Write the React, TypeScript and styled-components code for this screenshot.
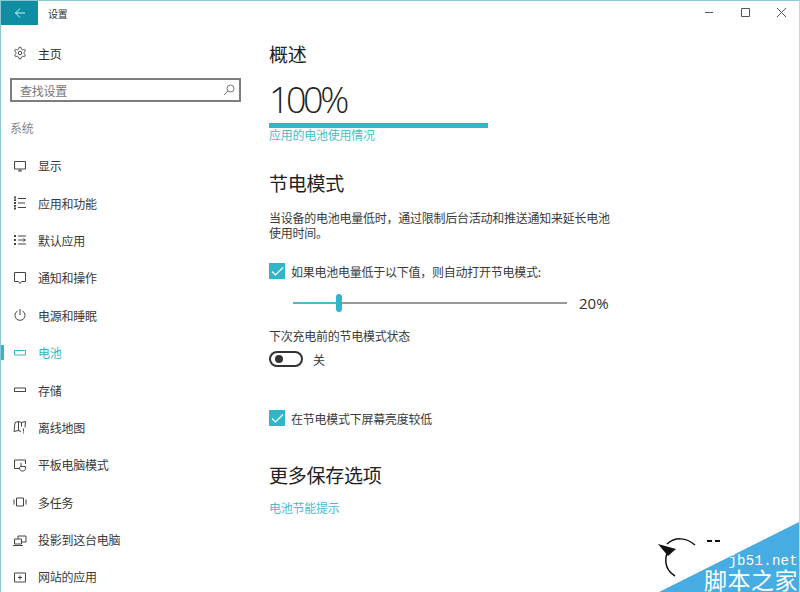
import React from "react";
import styled, { createGlobalStyle } from "styled-components";

const ACCENT = "#2fb6c9";
const CJK = `"Noto Sans CJK SC", "Liberation Sans", sans-serif`;

const GlobalStyle = createGlobalStyle`
  html, body {
    margin: 0;
    padding: 0;
    background: #fff;
    overflow: hidden;
  }
`;

const Window = styled.div`
  position: relative;
  box-sizing: border-box;
  width: 800px;
  height: 592px;
  overflow: hidden;
  background: #fff;
  border-top: 1px solid #8cc8d0;
  border-left: 1px solid #8cc8d0;
  border-right: 1px solid #b5dde2;
  font-family: ${CJK};
  letter-spacing: -0.25px;
  color: #2b2b2b;
`;

const TitleBar = styled.div`
  display: flex;
  align-items: center;
  height: 24px;
`;

const BackButton = styled.div`
  display: flex;
  align-items: center;
  justify-content: center;
  width: 37px;
  height: 24px;
  background: #0f8ea3;
`;

const Title = styled.div`
  margin-left: 10px;
  font-size: 10px;
  color: #333;
`;

const WindowControls = styled.div`
  display: flex;
  align-items: center;
  margin: 0 13px 2px auto;
  gap: 27px;
  color: #555;
`;

const Body = styled.div`
  display: flex;
`;

const Sidebar = styled.nav`
  box-sizing: border-box;
  width: 249px;
  flex: none;
`;

const HomeRow = styled.div`
  display: flex;
  align-items: center;
  height: 20px;
  margin-top: 18px;
  padding-left: 12px;
  gap: 11px;
  font-size: 12px;
`;

const SearchBox = styled.div`
  box-sizing: border-box;
  display: flex;
  align-items: center;
  justify-content: space-between;
  width: 231px;
  height: 24px;
  margin: 15px 0 0 9px;
  padding: 0 4px 0 8px;
  border: 2px solid #7d7d7d;
  font-size: 12px;
  color: #777;
`;

const GroupLabel = styled.div`
  height: 16px;
  line-height: 16px;
  margin: 18px 0 11px 9px;
  font-size: 12px;
  color: #888;
`;

const NavRow = styled.div<{ $active?: boolean }>`
  position: relative;
  display: flex;
  align-items: center;
  height: 37.4px;
  padding-left: 12px;
  gap: 11px;
  font-size: 12px;
  white-space: nowrap;
  color: ${(p) => (p.$active ? "#35b5c8" : "#3a3a3a")};
  svg {
    color: ${(p) => (p.$active ? "#35b5c8" : "#444")};
  }
  ${(p) =>
    p.$active &&
    `&::before {
      content: "";
      position: absolute;
      left: 0;
      top: 11px;
      width: 3px;
      height: 15px;
      background: ${ACCENT};
    }`}
`;

const Content = styled.main`
  width: 345px;
  margin-left: 19px;
`;

const Heading = styled.h2<{ $top: number }>`
  margin: ${(p) => p.$top}px 0 0;
  height: 26px;
  line-height: 26px;
  font-size: 19px;
  font-weight: 400;
  color: #222;
  white-space: nowrap;
`;

const BigPercent = styled.div`
  margin-top: 10px;
  height: 46px;
  line-height: 46px;
  font-family: "Open Sans", "Liberation Sans", sans-serif;
  font-size: 36px;
  font-weight: 300;
  color: #222;
  letter-spacing: -3.5px;
`;

const ChargeBar = styled.div`
  width: 219px;
  height: 5px;
  background: ${ACCENT};
`;

const TextLink = styled.a<{ $top: number }>`
  display: block;
  margin-top: ${(p) => p.$top}px;
  height: 14px;
  line-height: 14px;
  font-size: 12px;
  color: #49bccd;
`;

const Paragraph = styled.p`
  margin: 14px 0 0;
  width: 345px;
  line-height: 15px;
  font-size: 12px;
  color: #3a3a3a;
`;

const CheckRow = styled.div<{ $top: number }>`
  display: flex;
  align-items: center;
  gap: 6px;
  height: 16px;
  margin-top: ${(p) => p.$top}px;
  font-size: 12px;
  color: #3a3a3a;
  white-space: nowrap;
`;

const CheckBox = styled.span`
  display: flex;
  align-items: center;
  justify-content: center;
  flex: none;
  width: 16px;
  height: 16px;
  background: ${ACCENT};
`;

const SliderRow = styled.div`
  display: flex;
  align-items: center;
  height: 18px;
  margin: 15px 0 0 24px;
`;

const SliderTrack = styled.div`
  position: relative;
  width: 274px;
  height: 2px;
  background: #999;
`;

const SliderFill = styled.div`
  height: 100%;
  background: #45bccd;
`;

const SliderThumb = styled.div`
  position: absolute;
  top: -8px;
  width: 6px;
  height: 18px;
  margin-left: -3px;
  border-radius: 3px;
  background: ${ACCENT};
`;

const SliderValue = styled.span`
  margin-left: 12px;
  font-family: "Open Sans", "Liberation Sans", sans-serif;
  font-size: 15px;
  letter-spacing: 0;
  color: #333;
`;

const PlainLabel = styled.div`
  margin-top: 16px;
  height: 16px;
  line-height: 16px;
  font-size: 12px;
  color: #3a3a3a;
`;

const ToggleRow = styled.div`
  display: flex;
  align-items: center;
  gap: 10px;
  height: 16px;
  margin-top: 7px;
  font-size: 12px;
  color: #3a3a3a;
`;

const Toggle = styled.span`
  box-sizing: border-box;
  display: flex;
  align-items: center;
  width: 34px;
  height: 16px;
  padding-left: 4px;
  border: 2px solid #333;
  border-radius: 8px;
  &::before {
    content: "";
    width: 8px;
    height: 8px;
    border-radius: 50%;
    background: #333;
  }
`;

const Watermark = styled.div`
  position: absolute;
  right: 0;
  bottom: 0;
  width: 140px;
  height: 70px;
  background: #45ade2;
  clip-path: polygon(100% 0, 100% 100%, 0 100%);
`;

const WatermarkSite = styled.div`
  position: absolute;
  right: 1px;
  bottom: 24px;
  line-height: 14px;
  font-family: "Liberation Mono", monospace;
  font-size: 14px;
  letter-spacing: 0.3px;
  color: #fff;
`;

const WatermarkName = styled.div`
  position: absolute;
  right: 1px;
  bottom: 1px;
  font-size: 23px;
  line-height: 23px;
  letter-spacing: 0.5px;
  color: #fff;
`;

const Swirl = styled.svg`
  position: absolute;
  left: 649px;
  bottom: 12px;
`;

const Icon: React.FC<{ children: React.ReactNode }> = ({ children }) => (
  <svg width="14" height="14" viewBox="0 0 14 14" fill="none" stroke="currentColor" strokeWidth="1">
    {children}
  </svg>
);

const Check = () => (
  <svg width="13" height="11" viewBox="0 0 13 11" fill="none" stroke="#fff" strokeWidth="1.2">
    <path d="M1 5.500l3.500 3.500L12 1.500" />
  </svg>
);

const navItems: { label: string; icon: React.ReactNode; active?: boolean }[] = [
  { label: "显示", icon: <path d="M1.500 2.500h11v7.500h-11zM5 12h4M7 10v2" /> },
  {
    label: "应用和功能",
    icon: (
      <>
        <path d="M1 1.500h2M1 4.200h2M1 7h2M1 9.800h2M1 12.500h2" strokeWidth="1.800" />
        <path d="M5 2.500h8M5 7h7M5 11.500h8" />
      </>
    ),
  },
  {
    label: "默认应用",
    icon: (
      <>
        <path d="M1 3h2M1 7h2M1 11h2" strokeWidth="1.800" />
        <path d="M5 3h8M5 7h7M5 11h8M10.500 5.500l2 1.500-2 1.500" />
      </>
    ),
  },
  { label: "通知和操作", icon: <path d="M1.500 1.500h11v9h-4l-1.500 2-1.500-2h-4z" /> },
  { label: "电源和睡眠", icon: <path d="M7 1v6M4.500 3A5 5 0 1 0 9.500 3" /> },
  { label: "电池", icon: <path d="M1.500 4.500h11v4.500h-11z" />, active: true },
  { label: "存储", icon: <path d="M1.500 5h11v3.500h-11zM1.500 8.500h11" /> },
  {
    label: "离线地图",
    icon: <path d="M2 2.500l3.500-1 3 1 4-1-.5 6M2 2.500l-1 9 4-1 3 1M5.500 1.500v9M8.500 2.500v4M10.500 8.500v3M10.500 12.500v1" />,
  },
  {
    label: "平板电脑模式",
    icon: (
      <>
        <path d="M6 10.500H1.500V2h11v4" />
        <path d="M8 5v4M8 8.500c-1 0-1.500.5-1.500 1.500 0 2 1 3 3 3s3-1 3-2.500V8.500H8" />
      </>
    ),
  },
  { label: "多任务", icon: <path d="M3.500 3h7v8h-7zM1 4.500v5M13 4.500v5" /> },
  { label: "投影到这台电脑", icon: <path d="M5 3h8v6H9M5 3v3M1.500 6h7v5h-7zM0 12.500h10" /> },
  { label: "网站的应用", icon: <path d="M1.500 3h11v9h-11zM7 5.500v4M5 7.500h4" /> },
];

export default function App() {
  return (
    <>
      <GlobalStyle />
      <Window>
        <TitleBar>
          <BackButton>
            <svg width="12" height="12" viewBox="0 0 12 12" fill="none" stroke="#bff" strokeWidth="1">
              <path d="M11 6H1.500M6 1.500L1.500 6 6 10.500" />
            </svg>
          </BackButton>
          <Title>设置</Title>
          <WindowControls>
            <svg width="9" height="9" viewBox="0 0 9 9" stroke="currentColor" fill="none">
              <path d="M0 4.500h8" />
            </svg>
            <svg width="9" height="9" viewBox="0 0 9 9" stroke="currentColor" fill="none">
              <path d="M.5.500h8v8h-8z" />
            </svg>
            <svg width="9" height="9" viewBox="0 0 9 9" stroke="currentColor" fill="none">
              <path d="M0 0l9 9M9 0l-9 9" />
            </svg>
          </WindowControls>
        </TitleBar>
        <Body>
          <Sidebar>
            <HomeRow>
              <svg width="14" height="14" viewBox="0 0 24 24" fill="none" stroke="#444" strokeWidth="1.700">
                <path d="M12.200 2h-.4a2 2 0 0 0-2 2v.2a2 2 0 0 1-1 1.700l-.4.300a2 2 0 0 1-2 0l-.2-.1a2 2 0 0 0-2.700.7l-.2.400a2 2 0 0 0 .7 2.700l.2.100a2 2 0 0 1 1 1.700v.6a2 2 0 0 1-1 1.700l-.2.100a2 2 0 0 0-.7 2.700l.2.400a2 2 0 0 0 2.700.7l.2-.1a2 2 0 0 1 2 0l.4.300a2 2 0 0 1 1 1.700v.2a2 2 0 0 0 2 2h.4a2 2 0 0 0 2-2v-.2a2 2 0 0 1 1-1.700l.4-.3a2 2 0 0 1 2 0l.2.100a2 2 0 0 0 2.700-.7l.2-.4a2 2 0 0 0-.7-2.700l-.2-.1a2 2 0 0 1-1-1.700v-.6a2 2 0 0 1 1-1.700l.2-.1a2 2 0 0 0 .7-2.700l-.2-.4a2 2 0 0 0-2.700-.7l-.2.100a2 2 0 0 1-2 0l-.4-.3a2 2 0 0 1-1-1.700V4a2 2 0 0 0-2-2z" />
                <circle cx="12" cy="12" r="3" />
              </svg>
              主页
            </HomeRow>
            <SearchBox>
              查找设置
              <svg width="12" height="12" viewBox="0 0 12 12" fill="none" stroke="#777" strokeWidth="1">
                <circle cx="7.500" cy="4.500" r="3.500" />
                <path d="M5 7L1 11" />
              </svg>
            </SearchBox>
            <GroupLabel>系统</GroupLabel>
            {navItems.map((item) => (
              <NavRow key={item.label} $active={item.active}>
                <Icon>{item.icon}</Icon>
                {item.label}
              </NavRow>
            ))}
          </Sidebar>
          <Content>
            <Heading $top={16}>概述</Heading>
            <BigPercent>100%</BigPercent>
            <ChargeBar />
            <TextLink $top={0}>应用的电池使用情况</TextLink>
            <Heading $top={28}>节电模式</Heading>
            <Paragraph>当设备的电池电量低时，通过限制后台活动和推送通知来延长电池使用时间。</Paragraph>
            <CheckRow $top={23}>
              <CheckBox>
                <Check />
              </CheckBox>
              如果电池电量低于以下值，则自动打开节电模式:
            </CheckRow>
            <SliderRow>
              <SliderTrack>
                <SliderFill style={{ width: "16.7%" }} />
                <SliderThumb style={{ left: "16.7%" }} />
              </SliderTrack>
              <SliderValue>20%</SliderValue>
            </SliderRow>
            <PlainLabel>下次充电前的节电模式状态</PlainLabel>
            <ToggleRow>
              <Toggle />关
            </ToggleRow>
            <CheckRow $top={43}>
              <CheckBox>
                <Check />
              </CheckBox>
              在节电模式下屏幕亮度较低
            </CheckRow>
            <Heading $top={36}>更多保存选项</Heading>
            <TextLink $top={13}>电池节能提示</TextLink>
          </Content>
        </Body>
        <Watermark />
        <Swirl width="76" height="45" viewBox="0 0 76 45" fill="none" stroke="#111">
          <path d="M17 9C25 2 36 2 45 10M17 18C14 28 17 36 25 41" strokeWidth="1.500" />
          <path d="M8 9l18 5-8 7z" fill="#111" stroke="none" />
          <path d="M57 6h16" strokeWidth="2" strokeDasharray="5 3" />
        </Swirl>
        <WatermarkSite>jb51.net</WatermarkSite>
        <WatermarkName>脚本之家</WatermarkName>
      </Window>
    </>
  );
}
